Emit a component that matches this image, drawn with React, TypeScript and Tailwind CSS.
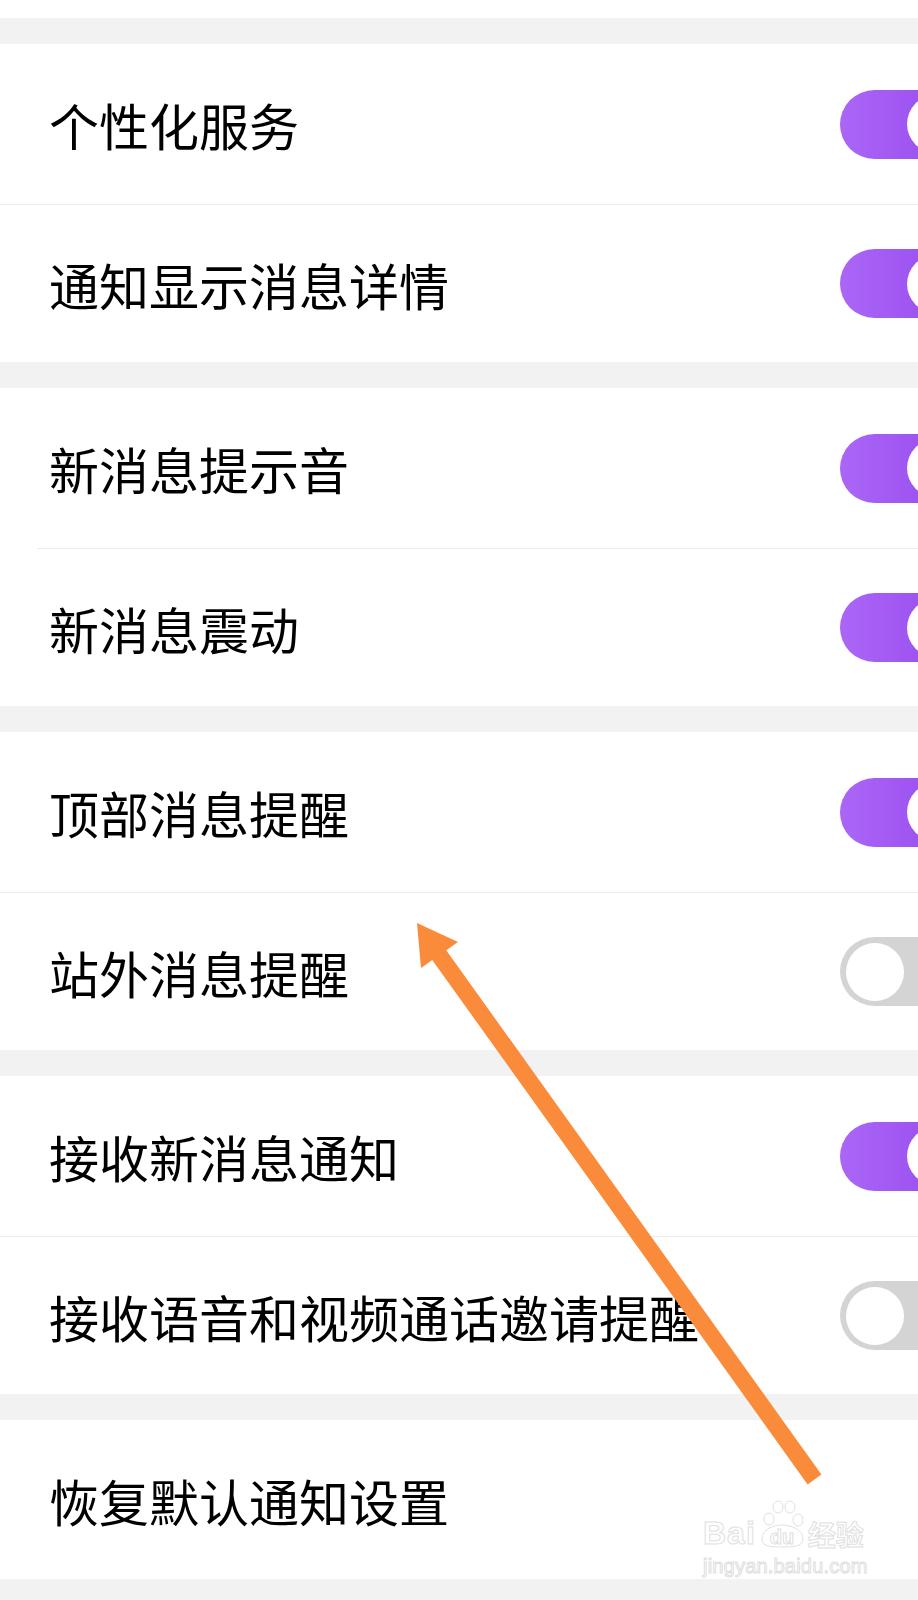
import React from "react";

type Item = { label: string; on?: boolean };

const sections: Item[][] = [
  [{ label: "个性化服务", on: true }, { label: "通知显示消息详情", on: true }],
  [{ label: "新消息提示音", on: true }, { label: "新消息震动", on: true }],
  [{ label: "顶部消息提醒", on: true }, { label: "站外消息提醒", on: false }],
  [{ label: "接收新消息通知", on: true }, { label: "接收语音和视频通话邀请提醒", on: false }],
  [{ label: "恢复默认通知设置" }],
];

function Toggle({ on }: { on: boolean }) {
  return (
    <div
      className={`shrink-0 w-[131px] h-[69px] mr-[-53px] rounded-full flex items-center ${
        on ? "bg-gradient-to-r from-[#ab66f6] to-[#9646ee]" : "bg-[#d4d4d4]"
      }`}
    >
      <div
        className={`w-[58px] h-[58px] rounded-full bg-white ${on ? "ml-auto mr-[6px]" : "ml-[6px]"}`}
      />
    </div>
  );
}

function Row({ item, h }: { item: Item; h: string }) {
  return (
    <div className={`${h} flex items-center pl-[49px]`}>
      <span className="flex-1 text-[50px] leading-none text-black whitespace-nowrap">{item.label}</span>
      {item.on !== undefined && <Toggle on={item.on} />}
    </div>
  );
}

function Watermark() {
  return (
    <div className="absolute left-[703px] top-[1499px] flex flex-col items-start text-white [-webkit-text-stroke:1px_#e0e0e0] font-['Liberation_Sans',sans-serif]">
      <div className="flex items-end h-[50px]">
        <span className="text-[32px] leading-none font-bold tracking-[1px]">Bai</span>
        <svg width="50" height="50" viewBox="0 0 50 50" className="mx-[1px]">
          <g fill="white" stroke="#e0e0e0" strokeWidth="1">
            <ellipse cx="12" cy="20" rx="5" ry="6" />
            <ellipse cx="21" cy="8" rx="5" ry="6" />
            <ellipse cx="33" cy="8" rx="5" ry="6" />
            <ellipse cx="41" cy="21" rx="5" ry="6" />
            <path d="M5 40 C5 30 17 26 25 26 C33 26 46 30 46 40 C46 47 38 48 25 48 C12 48 5 47 5 40 Z" />
          </g>
          <text x="25" y="45" textAnchor="middle" fontSize="20" fontWeight="700" fill="white" stroke="#e0e0e0" strokeWidth="1" fontFamily="Liberation Sans, sans-serif">du</text>
        </svg>
        <span className="text-[28px] leading-none font-bold mb-[1px] font-['Noto_Sans_CJK_SC',sans-serif]">经验</span>
      </div>
      <span className="text-[20px] leading-none mt-[7px] tracking-[0.2px]">jingyan.baidu.com</span>
    </div>
  );
}

export default function App() {
  return (
    <div className="relative w-[918px] h-[1600px] overflow-hidden bg-[#f2f2f2] font-['Noto_Sans_CJK_SC',sans-serif]">
      <div className="flex flex-col gap-[26px]">
        <div className="h-[18px] bg-white" />
        {sections.map((rows, si) => (
          <div key={si} className="bg-white flex flex-col">
            {rows.map((item, ri) => (
              <React.Fragment key={ri}>
                {ri > 0 && <div className={`h-px bg-[#ececec] ${si === 1 ? "ml-[37px]" : ""}`} />}
                <Row item={item} h={rows.length > 1 ? (ri === 0 ? "h-[160px]" : "h-[157px]") : "h-[159px]"} />
              </React.Fragment>
            ))}
          </div>
        ))}
      </div>

      {/* annotation arrow */}
      <svg className="absolute inset-0 pointer-events-none" width="918" height="1600" viewBox="0 0 918 1600">
        <line x1="437" y1="952" x2="814.5" y2="1479.5" stroke="#f98b3b" strokeWidth="17" />
        <polygon points="417,923 421,968 458,942" fill="#f98b3b" />
      </svg>

      <Watermark />
    </div>
  );
}
